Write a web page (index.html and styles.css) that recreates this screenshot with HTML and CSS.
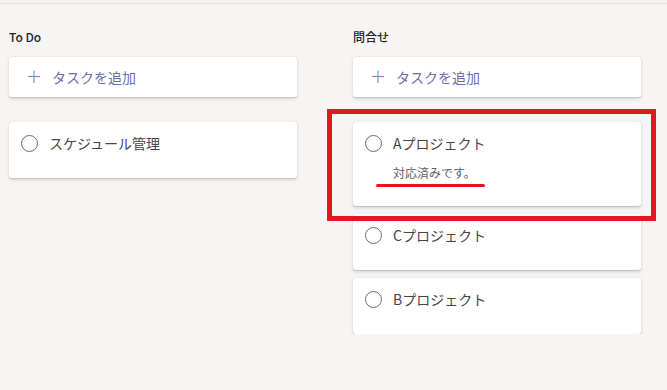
FILE: index.html
```html
<!DOCTYPE html>
<html lang="ja">
<head>
    <meta charset="UTF-8">
    <meta name="viewport" content="width=device-width, initial-scale=1.0">
    <title>Tasks</title>
    <link rel="stylesheet" href="styles.css">
</head>
<body>
    <div class="topline"></div>
    <div class="board">
        <div class="bucket">
            <h2 class="bucket-title">To Do</h2>
            <div class="card add-task">
                <span class="plus">+</span>
                <span>タスクを追加</span>
            </div>
            <div class="task-list">
                <div class="card task">
                    <div class="task-row">
                        <span class="check"></span>
                        <span class="task-name">スケジュール管理</span>
                    </div>
                </div>
            </div>
        </div>
        <div class="bucket">
            <h2 class="bucket-title">問合せ</h2>
            <div class="card add-task">
                <span class="plus">+</span>
                <span>タスクを追加</span>
            </div>
            <div class="task-list">
                <div class="card task marked">
                    <div class="task-row">
                        <span class="check"></span>
                        <span class="task-name">Aプロジェクト</span>
                    </div>
                    <p class="task-note">対応済みです。</p>
                    <span class="underline"></span>
                    <span class="highlight"></span>
                </div>
                <div class="card task">
                    <div class="task-row">
                        <span class="check"></span>
                        <span class="task-name">Cプロジェクト</span>
                    </div>
                </div>
                <div class="card task">
                    <div class="task-row">
                        <span class="check"></span>
                        <span class="task-name">Bプロジェクト</span>
                    </div>
                </div>
            </div>
        </div>
    </div>
</body>
</html>
```

FILE: styles.css
```css
body {
    background-color: #f6f5f4;
    font-family: "Noto Sans CJK JP", "Noto Sans", sans-serif;
    color: #3b3a39;
    margin: 0;
    padding: 0;
}
.topline {
    height: 3px;
    border-bottom: 1px solid #e1dfdd;
}
.board {
    display: flex;
    gap: 56px;
    padding: 25px 9px 0;
}
.bucket {
    width: 288px;
}
.bucket-title {
    font-size: 12px;
    font-weight: 500;
    line-height: 16px;
    color: #252423;
    margin: 0 0 12px;
}
.card {
    background-color: #fff;
    border-radius: 3px;
    box-shadow: 0 1.6px 3.6px rgba(0, 0, 0, 0.13), 0 0.3px 0.9px rgba(0, 0, 0, 0.11);
}
.add-task {
    height: 40px;
    display: flex;
    align-items: center;
    padding-left: 17px;
    box-sizing: border-box;
    color: #6b6daf;
    font-size: 14px;
}
.plus {
    font-family: "DejaVu Sans", sans-serif;
    font-weight: 200;
    font-size: 19px;
    width: 26px;
    line-height: 20px;
    margin-top: -2px;
    color: #7b7dba;
}
.task-list {
    display: flex;
    flex-direction: column;
    gap: 8px;
    margin-top: 25px;
}
.task {
    padding: 11px 12px 25px;
}
.task-row {
    display: flex;
    align-items: center;
    height: 20px;
}
.check {
    width: 15px;
    height: 15px;
    border: 1px solid #6b6a69;
    border-radius: 50%;
    margin-right: 11px;
}
.task-name {
    font-size: 14px;
    line-height: 20px;
    color: #484644;
}
.task-note {
    margin: 12px 0 0 28px;
    font-size: 12px;
    line-height: 16px;
    color: #605e5c;
}
.task.marked {
    position: relative;
}
.underline {
    position: absolute;
    left: 23px;
    top: 62px;
    width: 109px;
    height: 3px;
    border-radius: 2px;
    background-color: #e4161f;
}
.highlight {
    position: absolute;
    left: -26px;
    right: -15px;
    top: -13px;
    bottom: -15px;
    border: 5px solid #e4161f;
    z-index: 2;
}
```
